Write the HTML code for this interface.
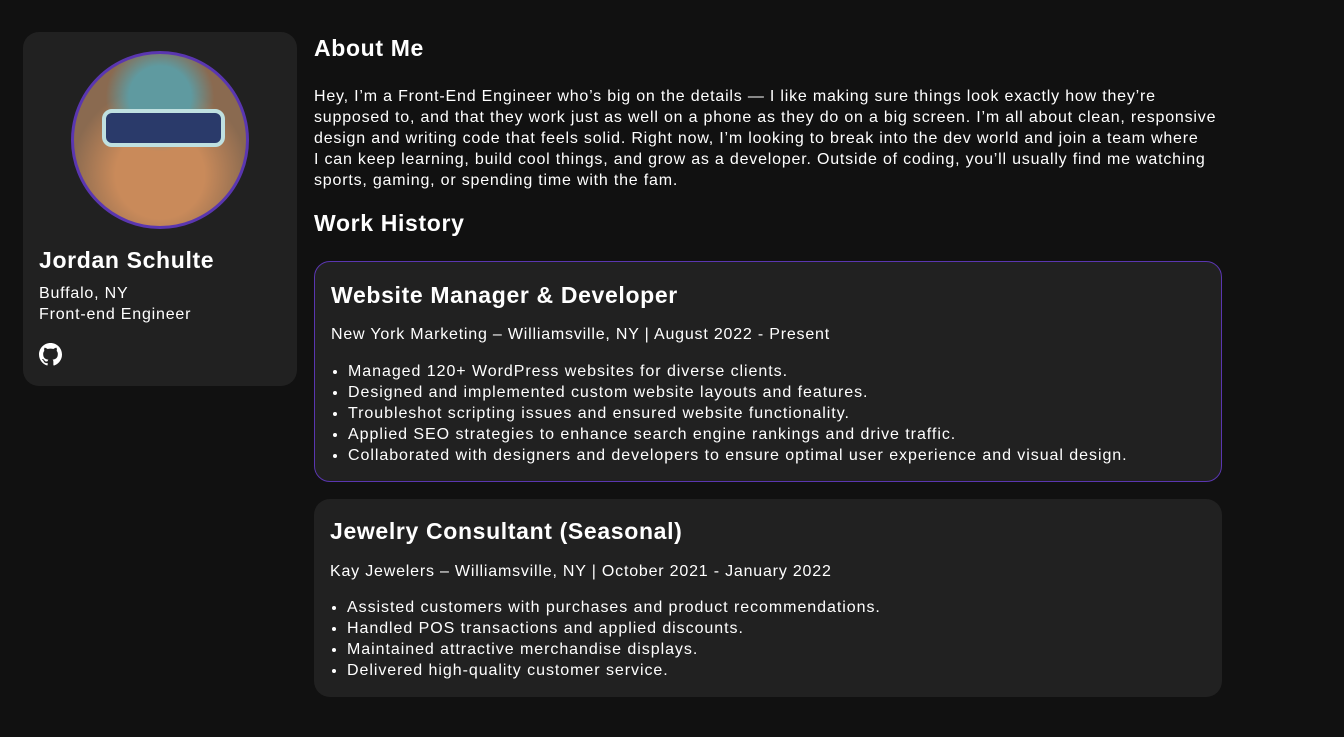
<!DOCTYPE html><html><head><style>
body{margin:0;background:#111;color:#fff;font-family:"Liberation Sans",sans-serif;width:1344px;height:737px;overflow:hidden;position:relative}
.side{position:absolute;left:23px;top:32px;width:274px;height:354px;background:#212121;border-radius:16px}
.av{position:absolute;left:48px;top:19px;width:172px;height:172px;border-radius:50%;border:3px solid #5a36b0;background:radial-gradient(circle at 50% 25%,#5f9aa0 0 20%,transparent 35%),radial-gradient(circle at 50% 70%,#c98a5a 0 30%,#8a6a50 60%),#777}
.av:after{content:"";position:absolute;left:28px;top:55px;width:115px;height:30px;border-radius:10px;border:4px solid #bfe0e0;background:#2a3a6a}
h2{position:absolute;margin:0;font-size:23px;font-weight:bold;white-space:nowrap;letter-spacing:0.65px}
.t{position:absolute;font-size:16px;line-height:21px;white-space:nowrap;letter-spacing:0.8px}
.card{position:absolute;left:314px;width:908px;background:#212121;border-radius:16px}
ul{position:absolute;margin:0;padding-left:33px;font-size:16px;line-height:21px;white-space:nowrap;letter-spacing:0.95px}
</style></head><body>
<div class="side"><div class="av"></div>
<h2 style="left:16px;top:215px">Jordan Schulte</h2>
<div class="t" style="left:16px;top:251px">Buffalo, NY<br>Front-end Engineer</div>
<svg style="position:absolute;left:16px;top:311px" width="23" height="23" viewBox="0 0 16 16"><path fill="#fff" d="M8 0C3.58 0 0 3.58 0 8c0 3.54 2.29 6.53 5.47 7.59.4.07.55-.17.55-.38v-1.34c-2.23.48-2.7-1.07-2.7-1.07-.36-.93-.89-1.17-.89-1.17-.73-.5.05-.49.05-.49.8.06 1.23.83 1.23.83.72 1.22 1.87.87 2.33.66.07-.52.28-.87.51-1.07-1.78-.2-3.65-.89-3.650-3.95 0-.87.31-1.59.82-2.15-.08-.2-.36-1.02.08-2.12 0 0 .67-.21 2.2.82a7.6 7.6 0 0 1 4 0c1.53-1.04 2.2-.82 2.2-.82.44 1.1.16 1.92.08 2.12.51.56.82 1.27.82 2.15 0 3.07-1.87 3.75-3.65 3.95.29.25.54.73.54 1.48v2.2c0 .21.15.46.55.38A8 8 0 0 0 16 8c0-4.42-3.58-8-8-8z"/></svg>
</div>
<h2 style="left:314px;top:35px">About Me</h2>
<div class="t" style="left:314px;top:86px">Hey, I’m a Front-End Engineer who’s big on the details — I like making sure things look exactly how they’re<br>supposed to, and that they work just as well on a phone as they do on a big screen. I’m all about clean, responsive<br>design and writing code that feels solid. Right now, I’m looking to break into the dev world and join a team where<br>I can keep learning, build cool things, and grow as a developer. Outside of coding, you’ll usually find me watching<br>sports, gaming, or spending time with the fam.</div>
<h2 style="left:314px;top:210px">Work History</h2>
<div class="card" style="top:261px;height:221px;border:1px solid #5a36b0;box-sizing:border-box">
<h2 style="left:16px;top:20px">Website Manager &amp; Developer</h2>
<div class="t" style="left:16px;top:62px">New York Marketing – Williamsville, NY | August 2022 - Present</div>
<ul style="left:0;top:99px"><li>Managed 120+ WordPress websites for diverse clients.</li><li>Designed and implemented custom website layouts and features.</li><li>Troubleshot scripting issues and ensured website functionality.</li><li>Applied SEO strategies to enhance search engine rankings and drive traffic.</li><li>Collaborated with designers and developers to ensure optimal user experience and visual design.</li></ul>
</div>
<div class="card" style="top:499px;height:198px">
<h2 style="left:16px;top:19px">Jewelry Consultant (Seasonal)</h2>
<div class="t" style="left:16px;top:62px">Kay Jewelers – Williamsville, NY | October 2021 - January 2022</div>
<ul style="left:0;top:98px"><li>Assisted customers with purchases and product recommendations.</li><li>Handled POS transactions and applied discounts.</li><li>Maintained attractive merchandise displays.</li><li>Delivered high-quality customer service.</li></ul>
</div>
</body></html>
